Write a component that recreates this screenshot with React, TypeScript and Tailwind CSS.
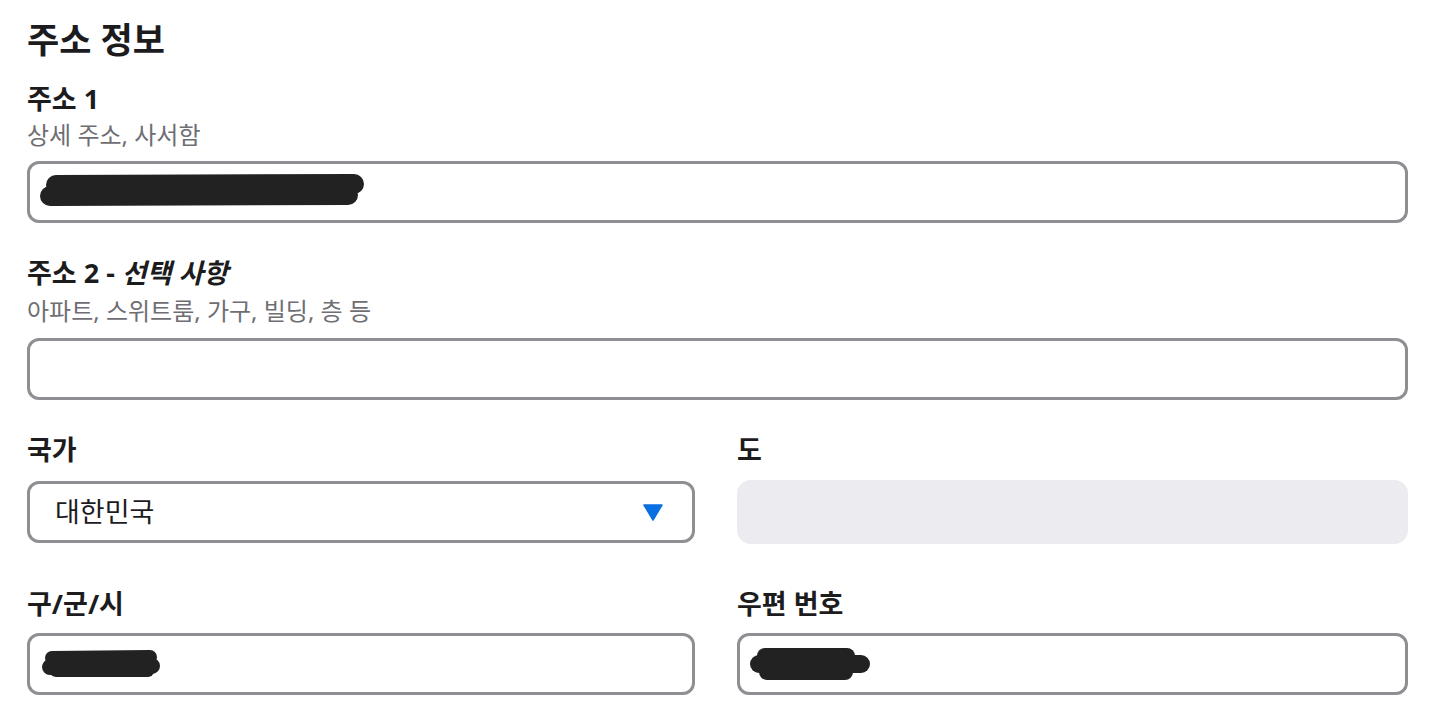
import React from "react";

const FONT = { fontFamily: '"Noto Sans", "Noto Sans CJK KR", sans-serif' };

function Label({ children, className = "" }: { children: React.ReactNode; className?: string }) {
  return (
    <div className={`text-[27px] leading-[32px] font-bold text-[#1c1c1e] ${className}`}>{children}</div>
  );
}

function Sub({ children, className = "" }: { children: React.ReactNode; className?: string }) {
  return <div className={`text-[24px] leading-[28px] text-[#6e6e73] ${className}`}>{children}</div>;
}

function Box({ children, className = "" }: { children?: React.ReactNode; className?: string }) {
  return (
    <div
      className={`h-[62px] box-border border-[3px] border-[#8e8e93] rounded-[12px] bg-white flex items-center ${className}`}
    >
      {children}
    </div>
  );
}

export default function App() {
  return (
    <div style={FONT} className="w-[1435px] h-[716px] bg-white px-[27px] pt-[20px] overflow-hidden">
      <div className="text-[35px] leading-[40px] font-bold text-[#1c1c1e]">주소 정보</div>

      <Label className="mt-[23px]">주소 1</Label>
      <Sub className="mt-[6px]">상세 주소, 사서함</Sub>
      <Box className="mt-[12px]">
        <svg width="340" height="40" viewBox="0 0 340 40" className="ml-[8px]">
          <path d="M18 13 L316 12" stroke="#222" strokeWidth="20" strokeLinecap="round" fill="none" />
          <path d="M12 24 L310 23" stroke="#222" strokeWidth="20" strokeLinecap="round" fill="none" />
        </svg>
      </Box>

      <Label className="mt-[34px]">
        주소 2 - <span className="italic">선택 사항</span>
      </Label>
      <Sub className="mt-[8px]">아파트, 스위트룸, 가구, 빌딩, 층 등</Sub>
      <Box className="mt-[13px]" />

      <div className="mt-[34px] grid grid-cols-[668px_1fr] gap-x-[42px]">
        <div>
          <Label>국가</Label>
          <Box className="mt-[15px] pl-[25px] pr-[29px] justify-between">
            <span className="text-[27px] font-normal text-[#1c1c1e]">대한민국</span>
            <svg width="20" height="17" viewBox="0 0 20 17">
              <path d="M1 1 L19 1 L10 16 Z" fill="#0a6fe0" stroke="#0a6fe0" strokeWidth="1.5" strokeLinejoin="round" />
            </svg>
          </Box>
        </div>
        <div>
          <Label>도</Label>
          <div className="mt-[14px] h-[64px] rounded-[14px] bg-[#ebebf0]" />
        </div>
      </div>

      <div className="mt-[44px] grid grid-cols-[668px_1fr] gap-x-[42px]">
        <div>
          <Label>구/군/시</Label>
          <Box className="mt-[13px]">
            <svg width="130" height="34" viewBox="0 0 130 34" className="ml-[8px]">
              <path d="M14 11 L112 10" stroke="#222" strokeWidth="14" strokeLinecap="round" fill="none" />
              <path d="M12 20 L114 19" stroke="#222" strokeWidth="16" strokeLinecap="round" fill="none" />
              <path d="M18 24 L110 24" stroke="#222" strokeWidth="12" strokeLinecap="round" fill="none" />
            </svg>
          </Box>
        </div>
        <div>
          <Label>우편 번호</Label>
          <Box className="mt-[13px]">
            <svg width="130" height="40" viewBox="0 0 130 40" className="ml-[9px]">
              <path d="M16 12 L98 12" stroke="#222" strokeWidth="16" strokeLinecap="round" fill="none" />
              <path d="M10 20 L112 20" stroke="#222" strokeWidth="18" strokeLinecap="round" fill="none" />
              <path d="M18 28 L96 28" stroke="#222" strokeWidth="16" strokeLinecap="round" fill="none" />
            </svg>
          </Box>
        </div>
      </div>
    </div>
  );
}
